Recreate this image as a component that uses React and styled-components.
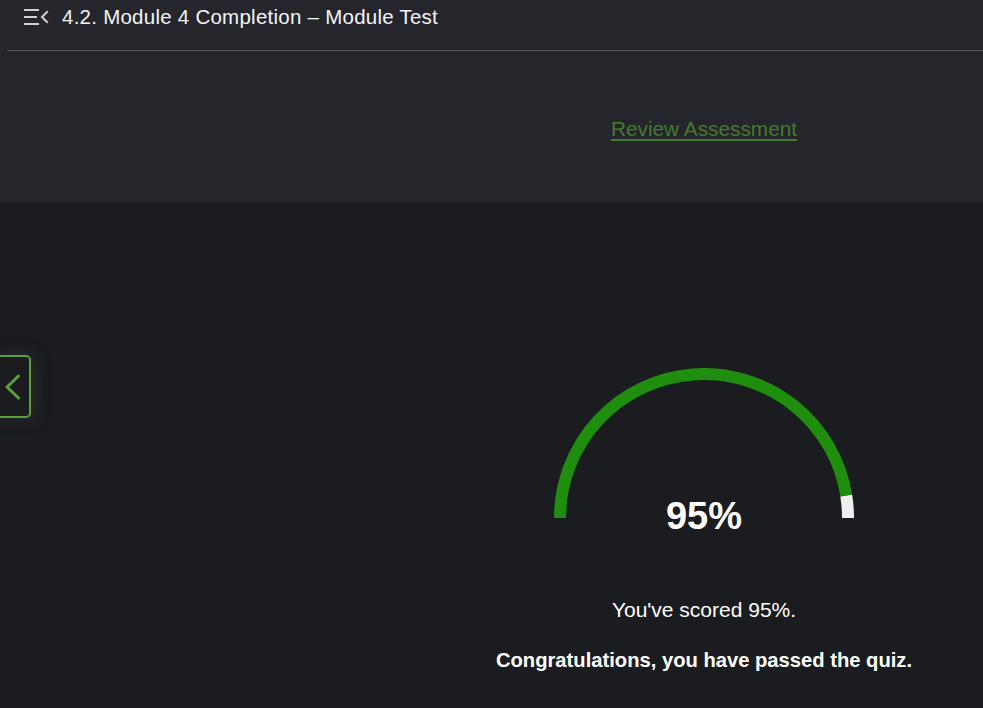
import React from "react";
import styled, { createGlobalStyle } from "styled-components";

const GlobalStyle = createGlobalStyle`
    html, body {
        margin: 0;
        padding: 0;
        background: #1b1c20;
        font-family: "Liberation Sans", Arial, sans-serif;
    }
`;

const SCORE = 95;

function MenuIcon() {
    return (
        <svg width="26" height="18" viewBox="0 0 26 18">
            <g stroke="#d0d0d3" strokeWidth="2" fill="none">
                <line x1="1" y1="2" x2="16" y2="2" />
                <line x1="1" y1="9" x2="14" y2="9" />
                <line x1="1" y1="16" x2="16" y2="16" />
                <polyline points="24,4 19,9 24,14" strokeLinecap="square" />
            </g>
        </svg>
    );
}

function Gauge({ value }) {
    const cx = 150, cy = 150, r = 144;
    const angle = Math.PI * (1 - value / 100);
    const ex = cx + r * Math.cos(angle);
    const ey = cy - r * Math.sin(angle);
    return (
        <svg width="300" height="150" viewBox="0 0 300 150">
            <path d={`M ${cx + r} ${cy} A ${r} ${r} 0 0 0 ${ex} ${ey}`} stroke="#efefef" strokeWidth="12" fill="none" />
            <path d={`M ${cx - r} ${cy} A ${r} ${r} 0 0 1 ${ex} ${ey}`} stroke="#1f8d0e" strokeWidth="12" fill="none" />
        </svg>
    );
}

export default function App() {
    return (
        <Page>
            <GlobalStyle />
            <TopPanel>
                <Header>
                    <MenuButton><MenuIcon /></MenuButton>
                    <Title>4.2. Module 4 Completion – Module Test</Title>
                </Header>
                <ReviewRow>
                    <ReviewLink href="#">Review Assessment</ReviewLink>
                </ReviewRow>
            </TopPanel>
            <Body>
                <BackButton aria-label="Previous">
                    <svg width="16" height="26" viewBox="0 0 16 26">
                        <polyline points="13.5,2 2,13 13.5,24" stroke="#5aa13d" strokeWidth="3" fill="none" strokeLinecap="round" strokeLinejoin="round" />
                    </svg>
                </BackButton>
                <Result>
                    <GaugeWrap>
                        <Gauge value={SCORE} />
                        <Score>{SCORE}%</Score>
                    </GaugeWrap>
                    <Scored>You've scored {SCORE}%.</Scored>
                    <Passed>Congratulations, you have passed the quiz.</Passed>
                </Result>
            </Body>
        </Page>
    );
}

const Page = styled.div`
    width: 983px;
    height: 708px;
    overflow: hidden;
    color: #fff;
`;

const TopPanel = styled.div`
    height: 202px;
    background: #25262b;
`;

const Header = styled.div`
    height: 51px;
    margin-left: 7px;
    display: flex;
    align-items: flex-start;
    border-bottom: 1px solid #55565b;
    box-sizing: border-box;
`;

const MenuButton = styled.div`
    width: 26px;
    height: 18px;
    margin: 8px 0 0 16px;
`;

const Title = styled.div`
    margin: 5px 0 0 13px;
    font-size: 20.5px;
    letter-spacing: 0.25px;
    color: #f4f4f5;
`;

const ReviewRow = styled.div`
    padding: 66px 0 0 425px;
    display: flex;
    justify-content: center;
`;

const ReviewLink = styled.a`
    color: #437a2f;
    font-size: 20.8px;
    text-decoration: underline;
    text-underline-offset: 3px;
`;

const Body = styled.div`
    position: relative;
    height: 506px;
    display: flex;
`;

const BackButton = styled.div`
    position: absolute;
    left: -4px;
    top: 153px;
    width: 35px;
    height: 63px;
    box-sizing: border-box;
    border: 2px solid #5aa13d;
    border-radius: 5px;
    display: flex;
    align-items: center;
    padding-left: 7px;
    box-shadow: 4px 0 16px rgba(70, 72, 80, 0.35);
    svg { display: block; }
`;

const Result = styled.div`
    flex: 1;
    padding: 166px 0 0 425px;
    display: flex;
    flex-direction: column;
    align-items: center;
`;

const GaugeWrap = styled.div`
    position: relative;
    width: 300px;
    height: 150px;
    svg { display: block; }
`;

const Score = styled.div`
    position: absolute;
    left: 0;
    right: 0;
    bottom: -20px;
    text-align: center;
    font-size: 38px;
    font-weight: 700;
    color: #fff;
`;

const Scored = styled.div`
    margin-top: 80px;
    font-size: 21px;
`;

const Passed = styled.div`
    margin-top: 27px;
    font-size: 20.2px;
    font-weight: 700;
`;
